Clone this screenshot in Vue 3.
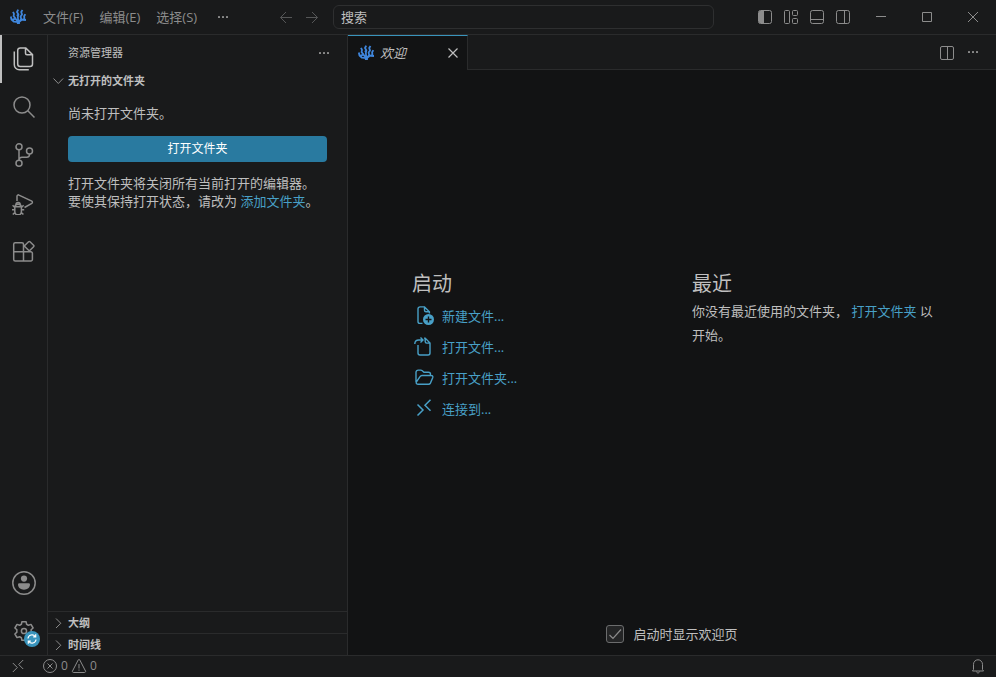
<template>
  <div class="workbench">
    <header class="titlebar">
      <Icon class="logo" name="logo" :size="16" />
      <nav class="menubar">
        <button v-for="m in menus" :key="m" type="button">{{ m }}</button>
        <button type="button" class="more" aria-label="更多"><Icon name="ellipsis" :size="16" /></button>
      </nav>
      <div class="history">
        <button type="button" aria-label="后退"><Icon name="back" :size="16" /></button>
        <button type="button" aria-label="前进"><Icon name="forward" :size="16" /></button>
      </div>
      <input v-model="query" class="command-center" type="text" placeholder="搜索" aria-label="搜索" />
      <div class="layout-actions">
        <button v-for="a in layoutActions" :key="a.icon" type="button" :aria-label="a.label">
          <Icon :name="a.icon" :size="16" />
        </button>
      </div>
      <div class="window-controls">
        <button v-for="w in windowControls" :key="w.icon" type="button" :aria-label="w.label">
          <Icon :name="w.icon" :size="16" />
        </button>
      </div>
    </header>

    <div class="main">
      <aside class="activitybar">
        <div class="group">
          <button v-for="v in views" :key="v.icon" type="button" :aria-label="v.label"
                  :class="{ active: activeView === v.icon }" @click="activeView = v.icon">
            <Icon :name="v.icon" :size="24" />
          </button>
        </div>
        <div class="group">
          <button type="button" aria-label="帐户"><Icon name="account" :size="24" /></button>
          <button type="button" aria-label="管理">
            <Icon name="gear" :size="24" />
            <span class="badge"><Icon name="sync" :size="12" /></span>
          </button>
        </div>
      </aside>

      <section class="sidebar">
        <div class="sidebar-title">
          <h2>资源管理器</h2>
          <button type="button" aria-label="视图和更多操作"><Icon name="ellipsis" :size="16" /></button>
        </div>
        <button type="button" class="pane-header"><Icon name="chevronDown" :size="16" />无打开的文件夹</button>
        <div class="pane-body">
          <p>尚未打开文件夹。</p>
          <button type="button" class="primary">打开文件夹</button>
          <p>打开文件夹将关闭所有当前打开的编辑器。要使其保持打开状态，请改为 <a href="#">添加文件夹</a>。</p>
        </div>
        <button v-for="p in panes" :key="p" type="button" class="pane-header collapsed">
          <Icon name="chevronRight" :size="16" />{{ p }}
        </button>
      </section>

      <main class="editor">
        <div class="tabs">
          <div class="tab">
            <Icon class="logo" name="logo" :size="16" />
            <span class="tab-label">欢迎</span>
            <button type="button" aria-label="关闭"><Icon name="close" :size="16" /></button>
          </div>
          <div class="tab-actions">
            <button type="button" aria-label="拆分编辑器"><Icon name="split" :size="16" /></button>
            <button type="button" aria-label="更多操作"><Icon name="ellipsis" :size="16" /></button>
          </div>
        </div>

        <div class="welcome">
          <section>
            <h2>启动</h2>
            <ul>
              <li v-for="s in startItems" :key="s.icon">
                <button type="button"><Icon :name="s.icon" :size="20" />{{ s.label }}</button>
              </li>
            </ul>
          </section>
          <section>
            <h2>最近</h2>
            <p>你没有最近使用的文件夹， <a href="#">打开文件夹</a> 以开始。</p>
          </section>
        </div>

        <footer class="welcome-footer">
          <label>
            <span class="check">
              <input v-model="showOnStartup" type="checkbox" />
              <Icon v-if="showOnStartup" name="check" :size="16" />
            </span>
            启动时显示欢迎页
          </label>
        </footer>
      </main>
    </div>

    <footer class="statusbar">
      <button type="button" class="remote" aria-label="打开远程窗口"><Icon name="remoteSmall" :size="16" /></button>
      <button type="button" class="problems">
        <Icon name="error" :size="16" /><span>0</span>
        <Icon name="warning" :size="16" /><span>0</span>
      </button>
      <button type="button" class="bell" aria-label="通知"><Icon name="bell" :size="16" /></button>
    </footer>
  </div>
</template>

<script setup>
import { h, ref } from 'vue'

const query = ref('')
const activeView = ref('files')
const showOnStartup = ref(true)

const menus = ['文件(F)', '编辑(E)', '选择(S)']
const layoutActions = [
  { icon: 'sidebarLeft', label: '切换主侧栏' },
  { icon: 'layout', label: '自定义布局' },
  { icon: 'panel', label: '切换面板' },
  { icon: 'sidebarRight', label: '切换辅助侧栏' },
]
const windowControls = [
  { icon: 'minimize', label: '最小化' },
  { icon: 'maximize', label: '最大化' },
  { icon: 'windowClose', label: '关闭窗口' },
]
const views = [
  { icon: 'files', label: '资源管理器' },
  { icon: 'search', label: '搜索' },
  { icon: 'scm', label: '源代码管理' },
  { icon: 'debug', label: '运行和调试' },
  { icon: 'extensions', label: '扩展' },
]
const panes = ['大纲', '时间线']
const startItems = [
  { icon: 'newFile', label: '新建文件...' },
  { icon: 'openFile', label: '打开文件...' },
  { icon: 'folder', label: '打开文件夹...' },
  { icon: 'remote', label: '连接到...' },
]

// [viewBox size, markup]
const icons = {
  logo: [16, '<g stroke-width="1.8" stroke-linejoin="round"><path d="M.8 7.500 1.500 10.500 4 12.700l4.500.5M3 2.800l1 2L3.600 7.200l2 2.300M1.800 10.800l3.600-1.200 2.400 2.800M8.200.600 7 3l1.400 2.400L7.800 8l.6 5M6.800 5.600l1.400 1.200M12.500 1 11.200 3l.8 2.400-1.400 2.200.6 2.400-2.600 3M15.300 5.200l-1.200 2 .3 2.600-3 1.200-2.800 2.400M16 11l-3.500-.2"/><path stroke-width="3" d="M8.400 12.500v2.500"/></g>'],
  ellipsis: [16, '<g fill="currentColor" stroke="none"><rect x="3" y="7" width="2" height="2" rx=".5"/><rect x="7" y="7" width="2" height="2" rx=".5"/><rect x="11" y="7" width="2" height="2" rx=".5"/></g>'],
  back: [16, '<path d="M14 8.500H2.500M8 3 2.500 8.500 8 14"/>'],
  forward: [16, '<path d="M2 8.500h11.500M8 3l5.500 5.500L8 14"/>'],
  sidebarLeft: [16, '<rect x="1.500" y="1.500" width="13" height="13" rx="2"/><path d="M2 3a1 1 0 0 1 1-1h4v12H3a1 1 0 0 1-1-1z" fill="currentColor" stroke="none"/>'],
  layout: [16, '<rect x="1.500" y="1.500" width="5" height="13" rx="1"/><rect x="9.500" y="1.500" width="5" height="5" rx="1"/><rect x="9.500" y="9.500" width="5" height="5" rx="1"/>'],
  panel: [16, '<rect x="1.500" y="1.500" width="13" height="13" rx="2"/><path d="M2 10.500h12"/>'],
  sidebarRight: [16, '<rect x="1.500" y="1.500" width="13" height="13" rx="2"/><path d="M9.500 2v12"/>'],
  split: [16, '<rect x="1.500" y="2.500" width="13" height="13" rx="1.500"/><path d="M8.500 3v12"/>'],
  minimize: [16, '<path d="M3 7.500h10"/>'],
  maximize: [16, '<path d="M3.500 3.500h9v9h-9z"/>'],
  windowClose: [16, '<path d="m3 3 10 10M13 3 3 13"/>'],
  close: [16, '<path stroke-width="1.200" d="m3.500 3.500 9 9M12.500 3.500l-9 9"/>'],
  chevronDown: [16, '<path d="m3.500 5.500 4.800 5 4.800-5"/>'],
  chevronRight: [16, '<path d="m6 3.500 4.800 4.800L6 13"/>'],
  check: [16, '<path stroke-width="1.200" d="m2.500 9 3.500 3.500L14 3.500"/>'],
  files: [24, '<path stroke-width="1.500" d="M8.200.9h5.600l6.700 6.700v9.500a2.500 2.500 0 0 1-2.500 2.500H8.200a2.500 2.500 0 0 1-2.500-2.500V3.400A2.500 2.500 0 0 1 8.200.9zM13.500 1v5.200a1.500 1.500 0 0 0 1.500 1.500h5.300M2.300 4.500v13.300a5 5 0 0 0 5 5h9.500"/>'],
  search: [24, '<g stroke-width="1.500"><circle cx="10" cy="10" r="8"/><path d="m15.800 15.800 6.700 6.700"/></g>'],
  scm: [24, '<g stroke-width="1.500"><circle cx="7" cy="3.800" r="3"/><circle cx="7" cy="20.200" r="3"/><circle cx="17.500" cy="8" r="3"/><path d="M7 7v10M17.500 11v.5a2.700 2.700 0 0 1-2.700 2.700H10a3 3 0 0 0-3 2.800"/></g>'],
  debug: [24, '<g stroke-width="1.500"><path d="M5 10V5.200a1.300 1.300 0 0 1 2-1.100l12.800 6a1.300 1.300 0 0 1 0 2.200L12.500 16.500M2.800 16.500a3.300 3.300 0 0 1 6.600 0v4a3.300 3.300 0 0 1-6.600 0zM2.800 15.700h6.600M4 14.500v-1a2 2 0 0 1 4.200 0v1M2.800 18.700H0M9.400 18.700h2.800M2.800 16.500.6 14.300M9.400 16.500l2.200-2.200M3 21.300.8 23.500M9.200 21.300l2.200 2.200"/></g>'],
  extensions: [24, '<path stroke-width="1.500" d="M11.500 12.800V5.200a1.500 1.500 0 0 0-1.500-1.500H3.200a1.500 1.500 0 0 0-1.500 1.500v15.300A1.500 1.500 0 0 0 3.200 22h15.700a1.500 1.500 0 0 0 1.500-1.500v-6.200a1.500 1.500 0 0 0-1.500-1.500H1.700M11.500 12.800V22M16.600 2.800a1 1 0 0 1 1.400 0l3.600 3.500a1 1 0 0 1 0 1.400L18 11.300a1 1 0 0 1-1.400 0L13 7.700a1 1 0 0 1 0-1.400z"/>'],
  account: [24, '<circle cx="12" cy="12" r="11.200" stroke-width="1.500"/><g fill="currentColor" stroke="none"><circle cx="12" cy="7.600" r="3.100"/><path d="M7.400 12.200h9.200A1.400 1.400 0 0 1 18 13.600c0 3-2.500 5.200-6 5.200s-6-2.200-6-5.200a1.400 1.400 0 0 1 1.400-1.400z"/></g>'],
  gear: [24, '<g stroke-width="1.500" stroke-linejoin="round"><circle cx="12" cy="12" r="2.600"/><path d="m9.900 2.700-.5 2.600a7 7 0 0 0-1.800 1L5 5.400 2.900 9l2 1.800a7 7 0 0 0 0 2.300L2.900 15 5 18.600l2.600-.9a7 7 0 0 0 1.800 1l.5 2.600h4.200l.5-2.600a7 7 0 0 0 1.800-1l2.600.9 2.100-3.600-2-1.900a7 7 0 0 0 0-2.300l2-1.800L19 5.400l-2.600.9a7 7 0 0 0-1.800-1l-.5-2.600z"/></g>'],
  sync: [12, '<path stroke-width="1.200" d="M2 5.500a4 4 0 0 1 7.200-2M9.700 1.200v2.600H7.200M10 6.500a4 4 0 0 1-7.200 2M2.300 10.800V8.200h2.500"/>'],
  newFile: [20, '<path stroke-width="1.400" d="M8.500 17.400H6A2 2 0 0 1 4 15.400V2.900a2 2 0 0 1 2-2h4.500L15.400 5.800V7.500M10.500 1.100v3.200a1.500 1.500 0 0 0 1.500 1.500h3.200"/><circle cx="14.500" cy="13.500" r="5.500" fill="currentColor" stroke="none"/><path d="M14.500 10.500v6M11.500 13.500h6" stroke="#121314" stroke-width="1.400"/>'],
  openFile: [20, '<path stroke-width="1.400" d="M4 8v8a2 2 0 0 0 2 2h8a2 2 0 0 0 2-2V6l-4.800-4.900H10M11.200 1.300v3.300a1.500 1.500 0 0 0 1.500 1.500h3.200M.8 7c0-2.500 1.200-4 4-4h4M6.500.5 9 3 6.500 5.500"/>'],
  folder: [20, '<path stroke-width="1.400" d="M2 14V4.300a2.200 2.200 0 0 1 2.200-2.200h2.600c.6 0 1 .2 1.500.6L10 4.300h4.500a2 2 0 0 1 2 2v1M4.200 16.300h10.300c1 0 1.500-.4 1.900-1.200l2.300-5.300c.5-1.300-.2-2.300-1.500-2.300H8c-1 0-1.500.4-2 1.200L2.300 14c-.5 1.200.4 2.300 1.900 2.300z"/>'],
  remote: [20, '<path stroke-width="1.500" d="m3.500 5.500 5.500 5.500-5.500 5.500M16.500.800 11 6.300l5.500 5.500"/>'],
  remoteSmall: [16, '<path d="m2.800 5 4.500 4.500-4.500 4.500M13.200 2 8.700 6.500l4.500 4.500"/>'],
  error: [16, '<circle cx="8" cy="8" r="6.500"/><path d="m5.500 5.500 5 5M10.500 5.500l-5 5"/>'],
  warning: [16, '<path stroke-linejoin="round" d="M7.200 2a.9.9 0 0 1 1.600 0l5.700 11a1 1 0 0 1-.9 1.500H2.400A1 1 0 0 1 1.500 13zM8 6v4.500M8 11.500v1.200"/>'],
  bell: [16, '<path d="M3.500 11.500V6.300a4.500 4.500 0 0 1 9 0v5.200l1 1.500h-11zM6.500 13.500c.3 1 .8 1.500 1.500 1.500s1.200-.5 1.500-1.500"/>'],
}

function Icon({ name, size }) {
  const [box, markup] = icons[name]
  return h('svg', {
    class: 'icon',
    width: size,
    height: size,
    viewBox: `0 0 ${box} ${box}`,
    fill: 'none',
    stroke: 'currentColor',
    'aria-hidden': 'true',
    innerHTML: markup,
  })
}
Icon.props = ['name', 'size']
</script>

<style>
body {
  margin: 0;
  background: #121314;
}
</style>

<style scoped>
.workbench {
  display: flex; flex-direction: column;
  min-height: 100vh;
  background: #191a1b; color: #bfbfbf;
  font-family: "Open Sans", "Noto Sans CJK SC", sans-serif;
  font-size: 13px; line-height: 18px;
}
.workbench * { box-sizing: border-box; }
button {
  display: flex; align-items: center; justify-content: center;
  margin: 0; padding: 0; border: 0;
  background: none; color: inherit;
  font: inherit; cursor: pointer;
}
h2, p, ul { margin: 0; padding: 0; font-weight: 400; }
ul { list-style: none; }
a { color: #48a0c7; text-decoration: none; }
a:hover { text-decoration: underline; }
.icon { display: block; flex: none; }
.logo { color: #3f86dc; }

/* title bar */
.titlebar {
  display: flex; align-items: center;
  height: 35px; padding-left: 10px;
  border-bottom: 1px solid #2a2b2c;
  color: #8c8c8c;
}
.menubar { display: flex; margin-left: 9px; }
.menubar button { height: 22px; padding: 0 8px; white-space: nowrap; }
.menubar .more { padding: 0 10px; }
.history { display: flex; gap: 4px; margin: 0 10px 0 34px; color: #555657; }
.history button, .layout-actions button { width: 22px; height: 22px; }
.command-center {
  flex: 1; min-width: 60px; height: 24px; padding: 0 7px;
  background: #191a1b; color: #bfbfbf;
  border: 1px solid #2e2f30; border-radius: 6px;
  font: inherit; outline: none;
}
.command-center::placeholder { color: #bfbfbf; opacity: 1; }
.layout-actions { display: flex; gap: 4px; margin: 0 4px 0 40px; }
.window-controls { display: flex; }
.window-controls button { width: 46px; height: 34px; }

/* activity bar */
.main { display: flex; flex: 1; }
.activitybar {
  display: flex; flex-direction: column; justify-content: space-between;
  width: 48px; border-right: 1px solid #2a2b2c;
  color: #8c8c8c;
}
.activitybar button {
  position: relative;
  width: 48px; height: 48px;
}
.activitybar button.active { color: #bfbfbf; box-shadow: inset 2px 0 #bfbfbf; }
.badge {
  position: absolute; right: 8px; bottom: 8px;
  display: flex; align-items: center; justify-content: center;
  width: 16px; height: 16px; border-radius: 50%;
  background: #3994bc; color: #fff;
}

/* side bar */
.sidebar {
  display: flex; flex-direction: column;
  width: 300px; border-right: 1px solid #2a2b2c;
}
.sidebar-title {
  display: flex; align-items: center; justify-content: space-between;
  height: 35px; padding: 0 12px 0 20px;
}
.sidebar-title h2 { font-size: 11px; }
.sidebar-title button { width: 22px; height: 22px; color: #8c8c8c; }
.pane-header {
  justify-content: flex-start; gap: 2px;
  height: 22px; padding-left: 2px;
  font-size: 11px; font-weight: 700;
}
.pane-header.collapsed { border-top: 1px solid #2a2b2c; }
.pane-header .icon { color: #8c8c8c; }
.pane-body {
  display: flex; flex: 1; flex-direction: column; gap: 12px;
  padding: 12px 20px;
}
.primary {
  height: 26px; margin-top: 2px; border-radius: 4px;
  background: #297aa0; color: #fff;
  font-size: 12px;
}

/* editor */
.editor {
  display: flex; flex: 1; flex-direction: column;
  min-width: 0; background: #121314;
}
.tabs { display: flex; height: 35px; background: #191a1b; }
.tab {
  display: flex; align-items: center; gap: 6px;
  width: 120px; padding: 0 4px 0 10px;
  background: #121314;
  border-top: 1px solid #3994bc; border-right: 1px solid #2a2b2c;
}
.tab-label { flex: 1; font-style: italic; }
.tab button { width: 20px; height: 20px; }
.tab-actions {
  display: flex; flex: 1; align-items: center; justify-content: flex-end; gap: 4px;
  padding-right: 12px; border-bottom: 1px solid #2a2b2c;
  color: #8c8c8c;
}
.tab-actions button { width: 22px; height: 22px; }
.welcome {
  display: grid; flex: 1; grid-template-columns: 1fr 1fr; column-gap: 32px;
  align-content: center;
  padding: 0 56px 0 64px;
}
.welcome h2 { font-size: 20px; line-height: 30px; }
.welcome p { line-height: 24px; }
.welcome ul { display: grid; gap: 7px; margin-top: 5px; }
.welcome li button { gap: 8px; height: 24px; padding-left: 2px; color: #48a0c7; }
.welcome-footer { display: flex; justify-content: center; padding: 6px 0 12px; }
.welcome-footer label { display: flex; align-items: center; gap: 9px; cursor: pointer; }
.check { display: grid; place-items: center; color: #8c8c8c; }
.check > * { grid-area: 1 / 1; }
.check .icon { pointer-events: none; }
.check input {
  width: 18px; height: 18px; margin: 0;
  appearance: none;
  background: #242526; border: 1px solid #6b6c6d; border-radius: 3px;
}

/* status bar */
.statusbar {
  display: flex; align-items: center;
  height: 22px; padding: 0 10px 2px;
  border-top: 1px solid #2a2b2c;
  color: #8c8c8c; font-size: 12px;
}
.problems { gap: 3px; margin-left: 16px; }
.bell { margin-left: auto; }
</style>
